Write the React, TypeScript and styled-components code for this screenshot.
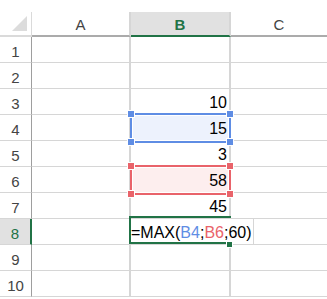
import React from "react";
import styled, { createGlobalStyle } from "styled-components";

const GlobalStyle = createGlobalStyle`
  body {
    margin: 0;
    background: #fff;
    font-family: "Liberation Sans", Arial, sans-serif;
  }
`;

const GREEN = "#217346";
const GRID = "#d6d6d6";

const ranges = {
  blue: { line: "#5f8de4", fill: "#edf2fd" },
  red: { line: "#e9636a", fill: "#fdeeee" },
};

type RangeKind = keyof typeof ranges;

const Sheet = styled.div`
  padding-top: 12px;
  display: grid;
  grid-template-columns: 32px 99px 100px 1fr;
  grid-template-rows: 25px;
  grid-auto-rows: 26px;
`;

const Corner = styled.div`
  position: relative;
  box-sizing: border-box;
  border-right: 1px solid #dadada;
  border-bottom: 2px solid #dadada;
`;

const CornerMark = styled.svg`
  position: absolute;
  left: 12px;
  top: 4px;
`;

const ColHeader = styled.div<{ $active?: boolean; $last?: boolean }>`
  box-sizing: border-box;
  display: flex;
  align-items: center;
  justify-content: center;
  padding-top: 1px;
  font-size: 15px;
  background: ${(p) => (p.$active ? "#e1e1e1" : "#fff")};
  color: ${(p) => (p.$active ? GREEN : "#444")};
  font-weight: ${(p) => (p.$active ? "bold" : "normal")};
  border-bottom: 2px solid ${(p) => (p.$active ? GREEN : "#ababab")};
  border-right: ${(p) => (p.$last ? "none" : `2px solid ${GRID}`)};
`;

const RowHeader = styled.div<{ $active?: boolean }>`
  box-sizing: border-box;
  display: flex;
  align-items: center;
  justify-content: center;
  padding-top: 3px;
  font-size: 15px;
  background: ${(p) => (p.$active ? "#e1e1e1" : "#fff")};
  color: ${(p) => (p.$active ? GREEN : "#444")};
  border-bottom: 1px solid ${GRID};
  border-right: ${(p) => (p.$active ? `2px solid ${GREEN}` : "1px solid #9e9e9e")};
`;

const Cell = styled.div<{ $last?: boolean }>`
  position: relative;
  box-sizing: border-box;
  display: flex;
  align-items: center;
  justify-content: flex-end;
  padding: 3px 2px 0 0;
  font-size: 16px;
  color: #000;
  border-bottom: 1px solid ${GRID};
  border-right: ${(p) => (p.$last ? "none" : `2px solid ${GRID}`)};
`;

const Value = styled.span`
  position: relative;
  z-index: 2;
`;

const RangeBox = styled.div<{ $kind: RangeKind }>`
  position: absolute;
  z-index: 1;
  left: -1px;
  right: -2px;
  top: -2px;
  bottom: -3px;
  border: 2px solid ${(p) => ranges[p.$kind].line};
  background: ${(p) => ranges[p.$kind].fill};
  box-shadow: inset 0 0 0 1px #fff;
`;

const Handle = styled.div<{ $color: string; $x: "left" | "right"; $y: "top" | "bottom" }>`
  position: absolute;
  width: 6px;
  height: 6px;
  background: ${(p) => p.$color};
  box-shadow: 0 0 0 1px #fff;
  ${(p) => p.$x}: -4px;
  ${(p) => p.$y}: -4px;
`;

const Editor = styled.div`
  position: absolute;
  z-index: 3;
  left: -2px;
  top: 0;
  height: 25px;
  box-sizing: border-box;
  display: flex;
  align-items: center;
  padding: 3px 1px 0 2px;
  background: #fff;
  border-right: 1px solid ${GRID};
  white-space: nowrap;
  font-size: 16px;
  color: #000;
`;

const Frame = styled.div`
  position: absolute;
  left: 0;
  top: -3px;
  width: 102px;
  height: 28px;
  box-sizing: border-box;
  border: 2px solid ${GREEN};
  border-right: none;
`;

const FillHandle = styled.div`
  position: absolute;
  right: -1px;
  bottom: -5px;
  width: 5px;
  height: 5px;
  background: ${GREEN};
  box-shadow: 0 0 0 1px #fff;
`;

const Ref = styled.span<{ $kind: RangeKind }>`
  color: ${(p) => ranges[p.$kind].line};
`;

type Row = { n: number; b?: string; range?: RangeKind; edit?: boolean };

const rows: Row[] = [
  { n: 1 },
  { n: 2 },
  { n: 3, b: "10" },
  { n: 4, b: "15", range: "blue" },
  { n: 5, b: "3" },
  { n: 6, b: "58", range: "red" },
  { n: 7, b: "45" },
  { n: 8, edit: true },
  { n: 9 },
  { n: 10 },
];

const Range = ({ kind }: { kind: RangeKind }) => {
  const c = ranges[kind].line;
  return (
    <RangeBox $kind={kind}>
      <Handle $color={c} $x="left" $y="top" />
      <Handle $color={c} $x="right" $y="top" />
      <Handle $color={c} $x="left" $y="bottom" />
      <Handle $color={c} $x="right" $y="bottom" />
    </RangeBox>
  );
};

const FormulaEditor = () => (
  <Editor>
    <Frame>
      <FillHandle />
    </Frame>
    =MAX(<Ref $kind="blue">B4</Ref>;<Ref $kind="red">B6</Ref>;60)
  </Editor>
);

const App = () => {
  return (
    <>
      <GlobalStyle />
      <Sheet>
        <Corner>
          <CornerMark width="16" height="16" viewBox="0 0 16 16">
            <polygon points="15,0 15,15 0,15" fill="#dcdcdc" />
          </CornerMark>
        </Corner>
        <ColHeader>A</ColHeader>
        <ColHeader $active>B</ColHeader>
        <ColHeader $last>C</ColHeader>
        {rows.map((r) => (
          <React.Fragment key={r.n}>
            <RowHeader $active={r.edit}>{r.n}</RowHeader>
            <Cell />
            <Cell>
              {r.range && <Range kind={r.range} />}
              {r.b && <Value>{r.b}</Value>}
              {r.edit && <FormulaEditor />}
            </Cell>
            <Cell $last />
          </React.Fragment>
        ))}
      </Sheet>
    </>
  );
};

export default App;
